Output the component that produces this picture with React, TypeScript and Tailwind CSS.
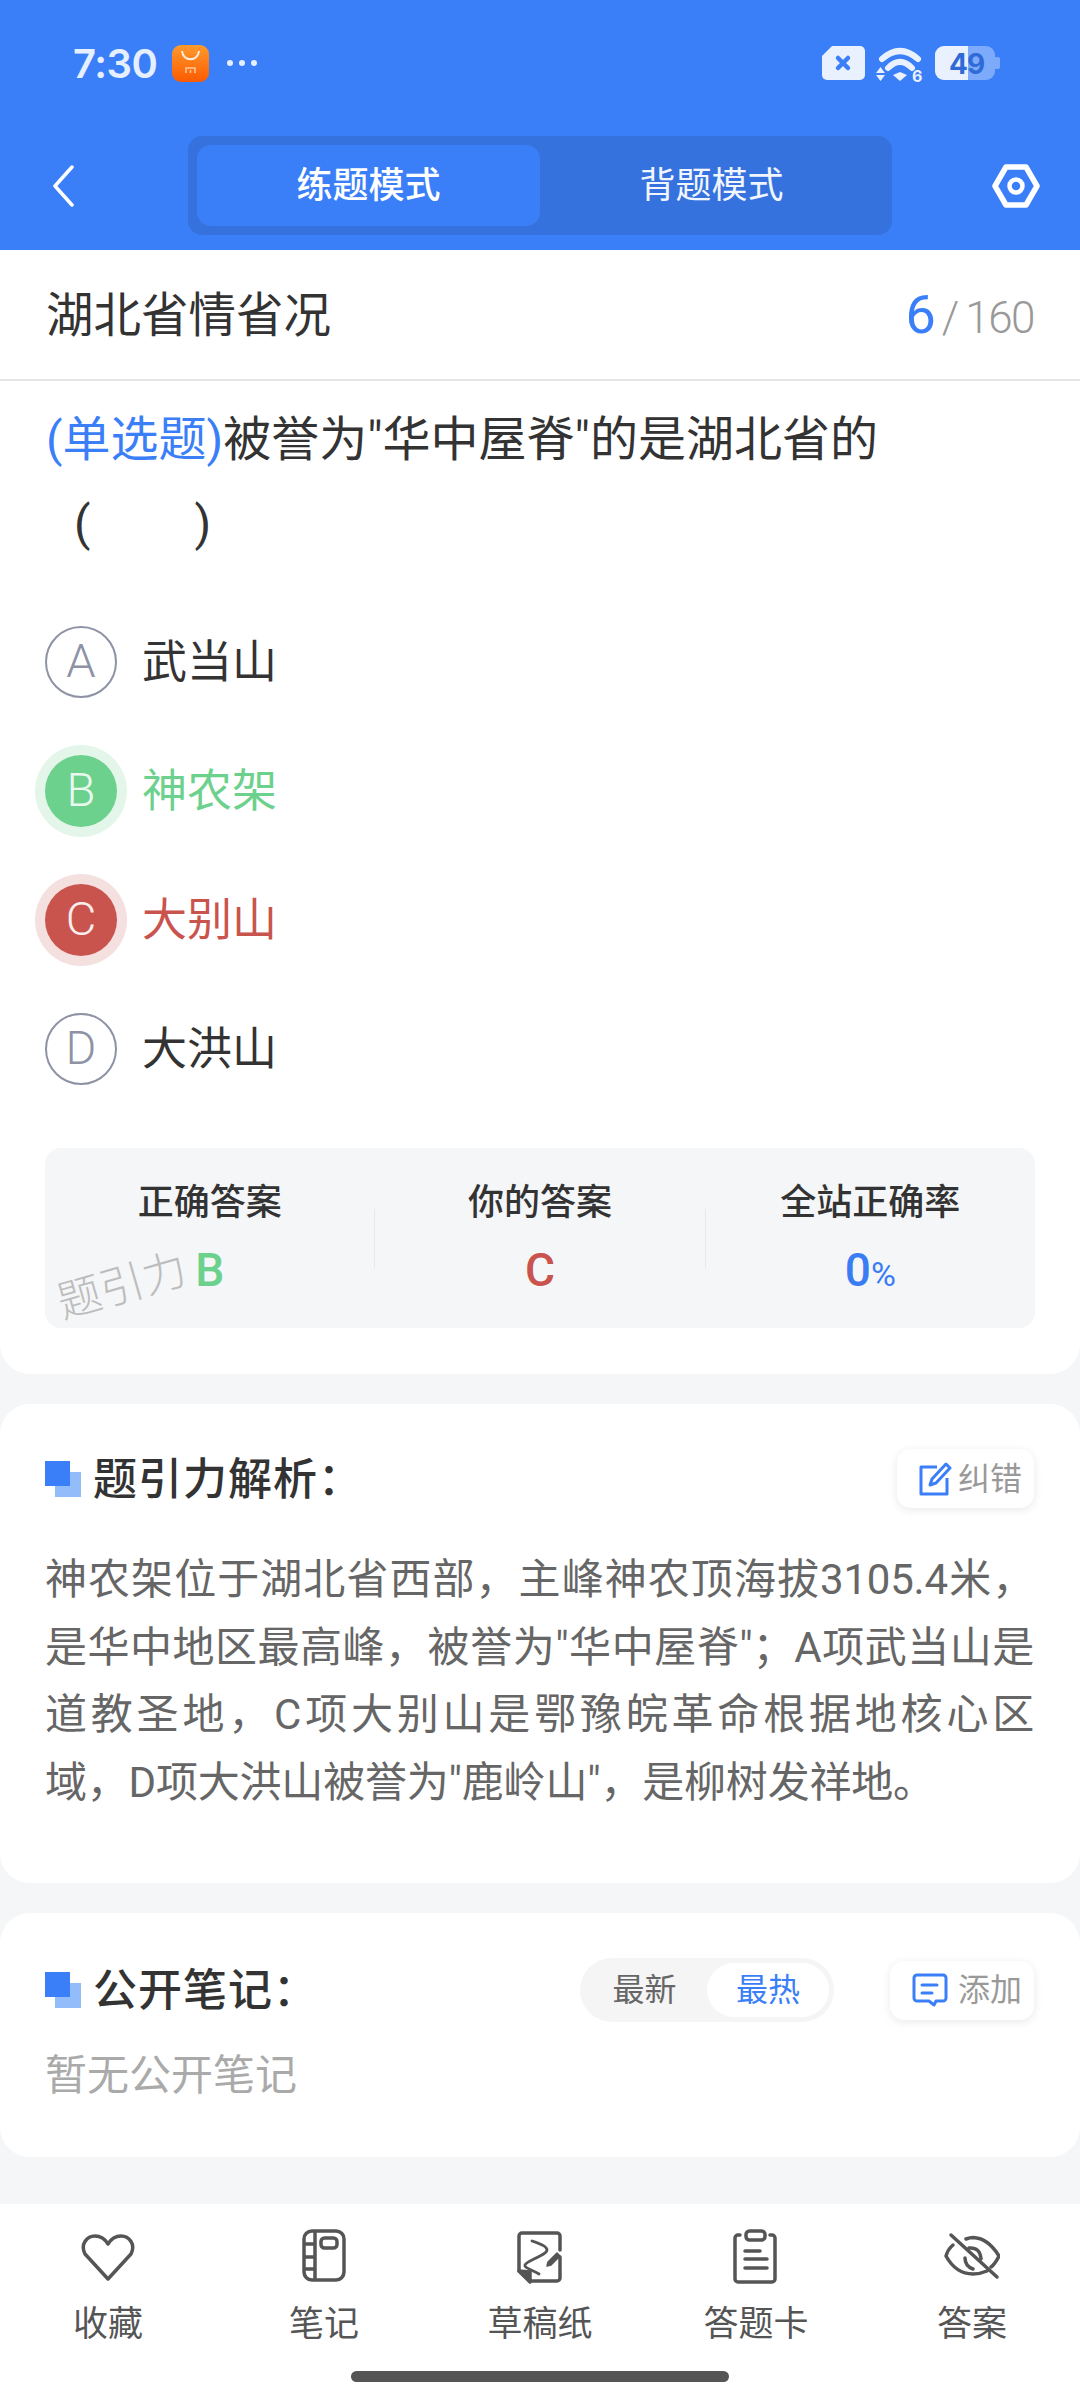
import React from "react";

const Squares = () => (
  <div className="relative w-[36px] h-[36px] shrink-0">
    <div className="absolute left-[10px] top-[11px] w-[26px] h-[25px] bg-[#93bcfb]" />
    <div className="absolute left-0 top-0 w-[25px] h-[25px] bg-[#3b7ff8]" />
  </div>
);

const Option = ({ l, t, kind }: { l: string; t: string; kind?: "ok" | "bad" }) => {
  const circle =
    kind === "ok"
      ? "bg-[#6dd18e] text-[#e9f9ee] shadow-[0_0_0_10px_#e3f6e9]"
      : kind === "bad"
      ? "bg-[#c9544e] text-[#fbeeee] shadow-[0_0_0_10px_#f5e0e0]"
      : "border-2 border-[#8e92a5] text-[#8e92a5]";
  const text = kind === "ok" ? "text-[#6dd18e]" : kind === "bad" ? "text-[#c9544e]" : "text-[#333333]";
  return (
    <div className="h-[129px] flex items-center">
      <div className={`w-[72px] h-[72px] rounded-full flex items-center justify-center text-[47px] font-light ${circle}`}>{l}</div>
      <div className={`ml-[25px] pt-[2px] text-[45px] ${text}`}>{t}</div>
    </div>
  );
};

const Stat = ({ label, children }: { label: string; children: React.ReactNode }) => (
  <div className="flex-1 flex flex-col items-center pt-[30px]">
    <div className="h-[50px] leading-[50px] text-[36px] font-medium text-[#333333]">{label}</div>
    <div className="mt-[14px] h-[56px] leading-[56px] text-[46px] font-medium">{children}</div>
  </div>
);

const NavItem = ({ icon, label }: { icon: React.ReactNode; label: string }) => (
  <div className="w-[216px] flex flex-col items-center">
    <div className="h-[56px] flex items-start justify-center">{icon}</div>
    <div className="mt-[18px] text-[35px] leading-[44px] text-[#555555]">{label}</div>
  </div>
);

export default function App() {
  return (
    <div className="w-[1080px] h-[2400px] flex flex-col overflow-hidden bg-[#f5f6f8] font-['Roboto','Noto_Sans_CJK_SC',sans-serif]">
      {/* header */}
      <div className="h-[250px] shrink-0 bg-[#3b7ff8] text-white">
        <div className="h-[136px] pt-[44px] pl-[73px] pr-[80px] flex items-start">
          <div className="text-[40px] leading-[38px] mt-[1px] font-semibold text-[#e6efff] font-['Inter',sans-serif] tracking-[-0.5px]">7:30</div>
          <svg width="37" height="37" viewBox="0 0 37 37" className="ml-[15px] mt-[1px]">
            <defs>
              <linearGradient id="g" x1="0" y1="0" x2="0" y2="1">
                <stop offset="0" stopColor="#ff9a2e" />
                <stop offset="1" stopColor="#fb5a00" />
              </linearGradient>
            </defs>
            <rect width="37" height="37" rx="9" fill="url(#g)" />
            <path d="M10 6c1 11 16 11 17 0" stroke="#ffeedd" strokeWidth="2" fill="none" />
            <path d="M14 28v-5h9v5M18.500 25v3" stroke="#ffc79a" strokeWidth="1.500" fill="none" />
          </svg>
          <div className="ml-[18px] mt-[16px] flex gap-[6px]">
            <div className="w-[6px] h-[6px] rounded-full bg-[#e6efff]" />
            <div className="w-[6px] h-[6px] rounded-full bg-[#e6efff]" />
            <div className="w-[6px] h-[6px] rounded-full bg-[#e6efff]" />
          </div>
          <div className="ml-auto flex items-start">
            <svg width="180" height="46" viewBox="0 0 180 46">
              <path d="M12 2h28a5 5 0 0 1 5 5v24a5 5 0 0 1-5 5H7a5 5 0 0 1-5-5V12z" fill="#eaf1fe" />
              <path d="M18 14l10 10M28 14L18 24" stroke="#3b7ff8" strokeWidth="4.500" strokeLinecap="round" />
              <path d="M62 15Q80 -1 98 15" stroke="#eaf1fe" strokeWidth="6" fill="none" strokeLinecap="round" />
              <path d="M68 24Q80 12 92 24" stroke="#eaf1fe" strokeWidth="6" fill="none" strokeLinecap="round" />
              <path d="M73 31l7-3 7 3-7 6z" fill="#eaf1fe" />
              <path d="M56 29l4.500-6 4.500 6zM56 31h9l-4.500 6z" fill="#eaf1fe" />
              <text x="92" y="38" fontSize="16" fontWeight="700" fill="#eaf1fe" fontFamily="Inter, sans-serif">6</text>
              <rect x="115" y="2" width="60" height="34" rx="9" fill="#7eaafb" />
              <rect x="174" y="13" width="6" height="12" rx="2" fill="#7eaafb" />
              <path d="M124 2h24v34h-24a9 9 0 0 1-9-9V11a9 9 0 0 1 9-9z" fill="#eaf1fe" />
              <text x="129" y="30" fontSize="28" fontWeight="700" fill="#2f6bd6" fontFamily="Inter, sans-serif" letterSpacing="-1">49</text>
            </svg>
          </div>
        </div>
        <div className="h-[99px] flex items-center">
          <div className="w-[188px] pl-[52px]">
            <svg width="22" height="42" viewBox="0 0 22 42">
              <path d="M20 2L3 21l17 19" stroke="#fff" strokeWidth="3.500" fill="none" strokeLinecap="round" strokeLinejoin="round" />
            </svg>
          </div>
          <div className="w-[704px] h-[99px] rounded-[14px] bg-[#3672dd] pl-[9px] py-[9px] flex">
            <div className="w-[343px] rounded-[14px] bg-[#3b7ff8] flex items-center justify-center text-[36px] font-medium">练题模式</div>
            <div className="w-[343px] flex items-center justify-center text-[36px] text-[#f0f5ff]">背题模式</div>
          </div>
          <div className="ml-[100px]">
            <svg width="48" height="44" viewBox="0 0 48 44">
              <path d="M14 3h20l11 19-11 19H14L3 22z" stroke="#fff" strokeWidth="5.500" fill="none" strokeLinejoin="round" />
              <circle cx="24" cy="22" r="6.500" stroke="#fff" strokeWidth="4.500" fill="none" />
            </svg>
          </div>
        </div>
      </div>

      {/* question card */}
      <div className="h-[1124px] shrink-0 bg-white rounded-b-[30px] flex flex-col">
        <div className="h-[131px] shrink-0 border-b-2 border-[#e5e5e5] pl-[46px] pr-[46px] flex items-center justify-between">
          <div className="pt-[4px] text-[47.500px] text-[#333333]">湖北省情省况</div>
          <div className="flex items-baseline">
            <span className="text-[54px] text-[#3b7ff8]">6</span>
            <span className="ml-[6px] text-[44px] font-light text-[#999999]">/</span>
            <span className="ml-[6px] text-[44px] font-light tracking-[-1.5px] text-[#999999]">160</span>
          </div>
        </div>
        <div className="px-[46px] pt-[17px] text-[48px] leading-[84px] text-[#333333]">
          <div>
            <span className="text-[#3b7ff8]">(单选题)</span>被誉为"华中屋脊"的是湖北省的
          </div>
          <div className="pl-[28px] flex">
            <span>(</span>
            <span className="ml-[104px]">)</span>
          </div>
        </div>
        <div className="mt-[31px] px-[45px]">
          <Option l="A" t="武当山" />
          <Option l="B" t="神农架" kind="ok" />
          <Option l="C" t="大别山" kind="bad" />
          <Option l="D" t="大洪山" />
        </div>
        <div className="relative mt-[35px] mx-[45px] h-[180px] rounded-[16px] bg-[#f5f6f8] flex">
          <Stat label="正确答案"><span className="text-[#6dd18e]">B</span></Stat>
          <div className="w-px h-[59px] self-center bg-[#e8e9ec]" />
          <Stat label="你的答案"><span className="text-[#c9544e]">C</span></Stat>
          <div className="w-px h-[59px] self-center bg-[#e8e9ec]" />
          <Stat label="全站正确率">
            <span className="text-[#3a7cf3]">0<span className="text-[34px] font-normal">%</span></span>
          </Stat>
          <div className="absolute left-[11px] top-[113px] -rotate-[16deg] text-[44px] leading-[50px] text-[#bdbdbd] font-light">题引力</div>
        </div>
      </div>

      {/* analysis card */}
      <div className="mt-[30px] h-[479px] shrink-0 bg-white rounded-[30px] pl-[45px] pr-[46px] pt-[45px]">
        <div className="h-[59px] flex items-center">
          <Squares />
          <div className="ml-[12px] pt-[2px] text-[44px] font-medium text-[#333333] tracking-[1px]">题引力解析：</div>
          <div className="ml-auto w-[137px] h-[59px] pr-[12px] rounded-[14px] bg-white shadow-[0_2px_10px_rgba(0,0,0,0.09)] flex items-center justify-end gap-[6px]">
            <svg width="34" height="34" viewBox="0 0 34 34" fill="none" stroke="#3b7ff8" strokeWidth="3">
              <path d="M19 5H3v27h26V16" strokeLinejoin="round" />
              <path d="M28 2l4 4-14 15-6 2 2-6z" strokeLinejoin="round" />
            </svg>
            <span className="text-[32px] text-[#999999]">纠错</span>
          </div>
        </div>
        <div className="mt-[38px] text-[42px] leading-[67.5px] tracking-[-0.2px] text-[#666666]">
          <div className="text-justify [text-align-last:justify]">
            神农架位于湖北省西部，主峰神农顶海拔3105.4米，<br />
            是华中地区最高峰，被誉为"华中屋脊"；A项武当山是<br />
            道教圣地，C项大别山是鄂豫皖革命根据地核心区
          </div>
          <div>域，D项大洪山被誉为"鹿岭山"，是柳树发祥地。</div>
        </div>
      </div>

      {/* notes card */}
      <div className="mt-[30px] h-[244px] shrink-0 bg-white rounded-[30px] pl-[45px] pr-[46px] pt-[45px]">
        <div className="h-[64px] flex items-center">
          <Squares />
          <div className="ml-[12px] pt-[2px] text-[44px] font-medium text-[#333333] tracking-[1px]">公开笔记：</div>
          <div className="ml-auto w-[254px] h-[64px] rounded-full bg-[#f5f5f6] flex items-center pr-[5px]">
            <div className="w-[127px] pl-[2px] text-center text-[32px] text-[#666666]">最新</div>
            <div className="w-[122px] h-[54px] rounded-full bg-white flex items-center justify-center text-[32px] text-[#3b7ff8]">最热</div>
          </div>
          <div className="ml-[56px] w-[144px] h-[59px] pr-[12px] rounded-[14px] bg-white shadow-[0_2px_10px_rgba(0,0,0,0.09)] flex items-center justify-end gap-[10px]">
            <svg width="36" height="34" viewBox="0 0 36 34" fill="none" stroke="#3b7ff8" strokeWidth="3">
              <path d="M5 2h26a3 3 0 0 1 3 3v20a3 3 0 0 1-3 3h-7l-2 4-5-4H5a3 3 0 0 1-3-3V5a3 3 0 0 1 3-3z" strokeLinejoin="round" />
              <path d="M10 12h15M10 20h10" strokeLinecap="round" />
            </svg>
            <span className="text-[32px] text-[#999999]">添加</span>
          </div>
        </div>
        <div className="mt-[24px] text-[42px] leading-[60px] text-[#aaaaaa]">暂无公开笔记</div>
      </div>

      <div className="flex-1" />

      {/* bottom nav */}
      <div className="h-[196px] shrink-0 bg-white flex flex-col">
        <div className="flex pt-[25px]">
          <NavItem
            label="收藏"
            icon={
              <svg width="54" height="56" viewBox="0 0 54 56" fill="none" stroke="#555555" strokeWidth="3.500" strokeLinejoin="round">
                <path d="M27 50L4 25C-1 15 6 7 14 7c6 0 10 3 13 8 3-5 7-8 13-8 8 0 15 8 10 18z" />
              </svg>
            }
          />
          <NavItem
            label="笔记"
            icon={
              <svg width="44" height="56" viewBox="0 0 44 56" fill="none" stroke="#555555" strokeWidth="3.500">
                <rect x="2" y="2" width="40" height="49" rx="8" />
                <path d="M13 2v49M2 15h11M2 28h11M2 40h11" />
                <rect x="19" y="9" width="16" height="10" rx="3.500" />
              </svg>
            }
          />
          <NavItem
            label="草稿纸"
            icon={
              <svg width="46" height="56" viewBox="0 0 46 56" fill="none" stroke="#555555" strokeWidth="3.500" strokeLinejoin="round" strokeLinecap="round">
                <path d="M43 21v-14a3 3 0 0 0-3-3H5a3 3 0 0 0-3 3v35l11 10h27a3 3 0 0 0 3-3V28" />
                <path d="M2 42l11 11V43z" fill="#555555" />
                <path d="M15 12c6 2 15 5 15 9 0 5-21 11-22 15-1 3 8 5 14 9" strokeWidth="2.800" />
                <path d="M31 33l9-9 3 3-9 9-4 1z" fill="#555555" strokeWidth="1.500" />
              </svg>
            }
          />
          <NavItem
            label="答题卡"
            icon={
              <svg width="46" height="56" viewBox="0 0 46 56" fill="none" stroke="#555555" strokeWidth="3.500" strokeLinejoin="round" strokeLinecap="round">
                <path d="M7 6H5a3 3 0 0 0-3 3v41a3 3 0 0 0 3 3h34a3 3 0 0 0 3-3V9a3 3 0 0 0-3-3h-2" />
                <rect x="13" y="2" width="19" height="9" rx="3.500" />
                <path d="M12 22h15M12 30h22M12 39h22" />
              </svg>
            }
          />
          <NavItem
            label="答案"
            icon={
              <svg width="56" height="56" viewBox="0 0 56 56" fill="none" stroke="#555555" strokeWidth="3.500" strokeLinecap="round" strokeLinejoin="round">
                <path d="M9 16Q4 20 2 27Q12 45 29 45Q36 45 43 42" />
                <path d="M22 10Q26 8.500 29 8.500Q44 9 55 27Q51 35 47 38" />
                <path d="M25 19Q36 18 37 30" />
                <path d="M21 29Q21 37 29 40" />
                <path d="M7 6L53 48" />
              </svg>
            }
          />
        </div>
        <div className="mt-[24px] self-center w-[378px] h-[11px] rounded-full bg-[#555555]" />
      </div>
    </div>
  );
}
